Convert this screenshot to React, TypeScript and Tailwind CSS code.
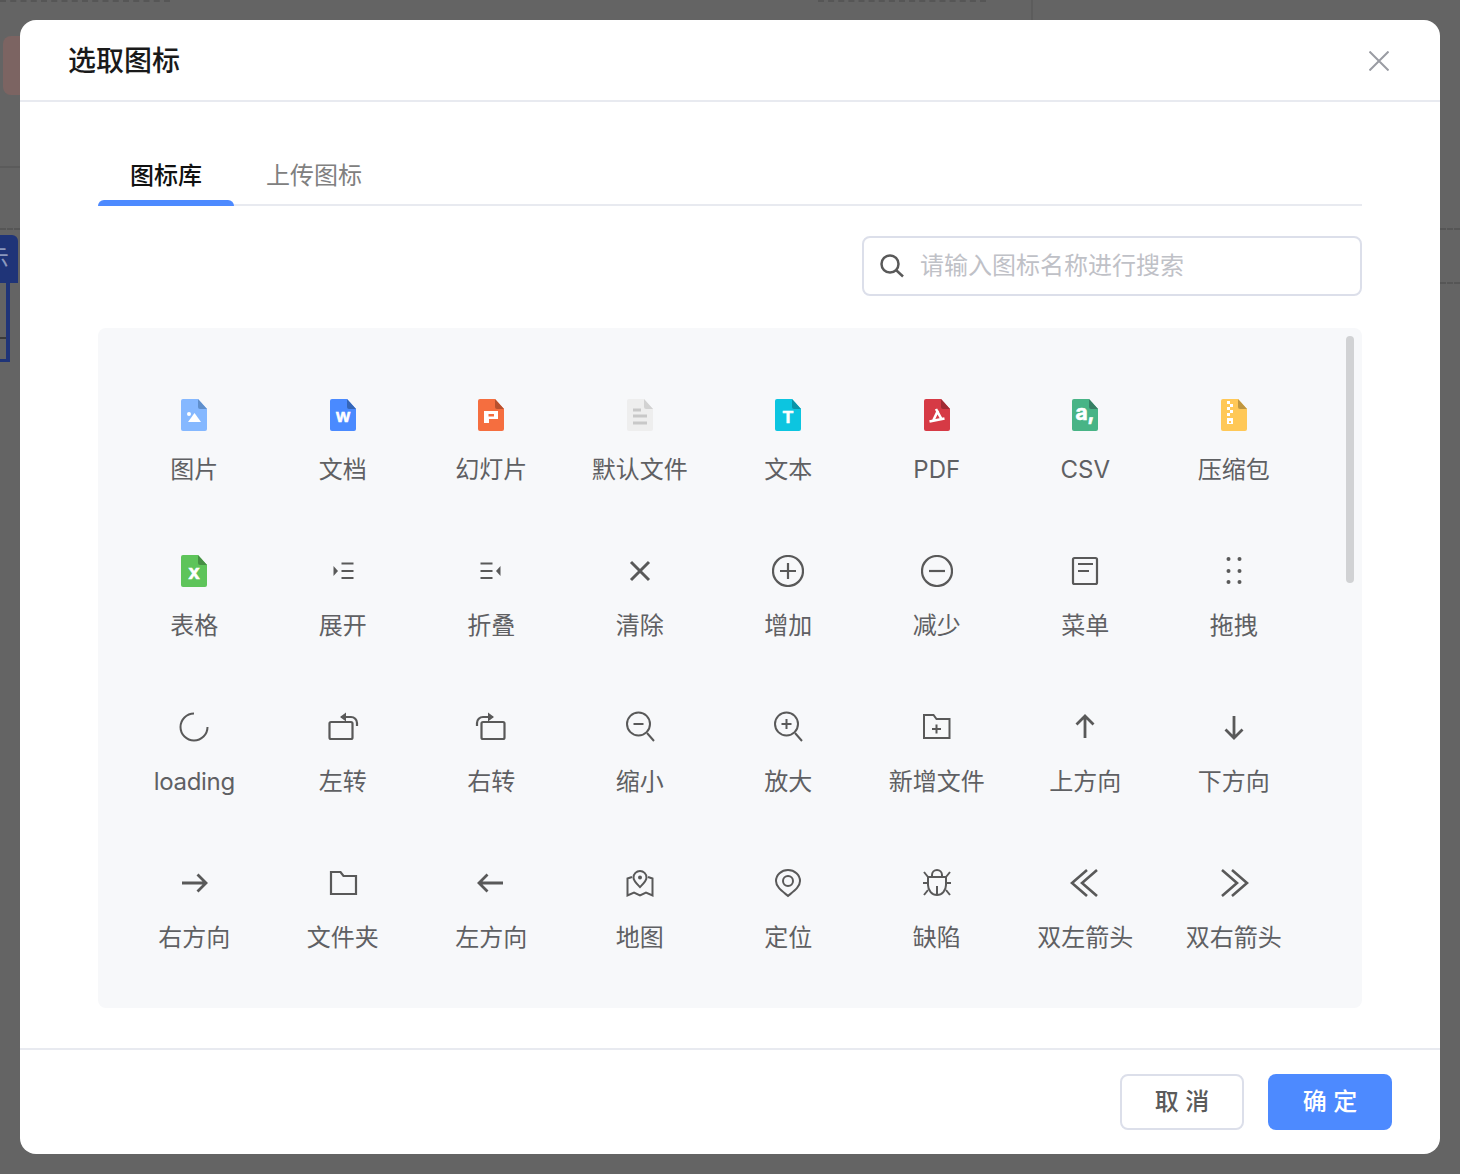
import React from "react";

const font = { fontFamily: '"Inter", "Noto Sans CJK SC", sans-serif' };

function FileIcon({ color, fold, children }: { color: string; fold: string; children?: React.ReactNode }) {
  return (
    <svg width="32" height="32" viewBox="-3 0 32 32">
      <path d="M2 0H17L26 10V30a2 2 0 0 1-2 2H2a2 2 0 0 1-2-2V2a2 2 0 0 1 2-2Z" fill={color} />
      <path d="M17 0L26 10H19a2 2 0 0 1-2-2Z" fill={fold} />
      {children}
    </svg>
  );
}

function Glyph({ t, size, y, family }: { t: string; size: number; y: number; family?: string }) {
  return (
    <text x="13" y={y} fontSize={size} fontWeight="700" fill="#fff" stroke="#fff" strokeWidth="0.6" textAnchor="middle" fontFamily={family ?? '"Liberation Sans", sans-serif'}>
      {t}
    </text>
  );
}

function Line({ children, w = 2 }: { children: React.ReactNode; w?: number }) {
  return (
    <svg width="32" height="32" viewBox="0 0 32 32" fill="none" stroke="#595959" strokeWidth={w}>
      {children}
    </svg>
  );
}

const RotateShape = () => (
  <>
    <rect x="2.5" y="11" width="23" height="17" rx="1.5" />
    <path d="M30 15V12a6 6 0 0 0-6-6H14" />
    <path d="M19 1.5L13 6L19 10.5Z" fill="#595959" stroke="none" />
  </>
);

const items: { label: string; icon: React.ReactNode }[] = [
  {
    label: "图片",
    icon: (
      <FileIcon color="#85b8ff" fold="#5f8fcc">
        <circle cx="8" cy="15" r="2" fill="#fff" />
        <path d="M7 23L13.5 14L20 23Z" fill="#fff" />
      </FileIcon>
    ),
  },
  { label: "文档", icon: <FileIcon color="#4a8aff" fold="#3566b8"><Glyph t="W" size={15} y={23} /></FileIcon> },
  { label: "幻灯片", icon: <FileIcon color="#f56e3f" fold="#b8502e"><path fillRule="evenodd" d="M6 12H20V20H11V24H6ZM10.5 15V17.5H16V15Z" fill="#fff" /></FileIcon> },
  {
    label: "默认文件",
    icon: (
      <FileIcon color="#eeeeee" fold="#d2d2d2">
        <path d="M6 11H14M6 17H20M6 24H20" stroke="#c8c8c8" strokeWidth="3" />
      </FileIcon>
    ),
  },
  { label: "文本", icon: <FileIcon color="#0cc5e0" fold="#0a94a8"><Glyph t="T" size={17} y={24} /></FileIcon> },
  {
    label: "PDF",
    icon: (
      <FileIcon color="#d63a45" fold="#a02b34">
        <path d="M12 10L18 21M14 11.5L9 22M5.5 22.5L20.5 19.5" stroke="#fff" strokeWidth="2.6" fill="none" />
      </FileIcon>
    ),
  },
  { label: "CSV", icon: <FileIcon color="#48b486" fold="#367f64"><Glyph t="a," size={21} y={21} family='"Inter", sans-serif' /></FileIcon> },
  {
    label: "压缩包",
    icon: (
      <FileIcon color="#ffc857" fold="#bf9640">
        <path d="M6 2h3v3H6ZM9 5h3v3H9ZM6 8h3v3H6ZM9 11h3v3H9ZM6 14h3v3H6Z" fill="#fff" />
        <path fillRule="evenodd" d="M6 19h6v6H6ZM8 22h2v2H8Z" fill="#fff" />
      </FileIcon>
    ),
  },
  { label: "表格", icon: <FileIcon color="#5ec45a" fold="#468f44"><Glyph t="x" size={20} y={24} /></FileIcon> },
  {
    label: "展开",
    icon: (
      <Line>
        <path d="M6.5 11L11 16L6.5 21Z" fill="#595959" stroke="none" />
        <path d="M14.5 8.5H26.5M14.5 16H26.5M14.5 23H26.5" />
      </Line>
    ),
  },
  {
    label: "折叠",
    icon: (
      <Line>
        <path d="M25.5 11L21 16L25.5 21Z" fill="#595959" stroke="none" />
        <path d="M5.5 8.5H17.5M5.5 16H17.5M5.5 23H17.5" />
      </Line>
    ),
  },
  { label: "清除", icon: <Line w={3}><path d="M7 7L25 25M25 7L7 25" /></Line> },
  {
    label: "增加",
    icon: (
      <Line w={2.2}>
        <circle cx="16" cy="16" r="15" />
        <path d="M16 8V24M8 16H24" />
      </Line>
    ),
  },
  {
    label: "减少",
    icon: (
      <Line w={2.2}>
        <circle cx="16" cy="16" r="15" />
        <path d="M8 16H24" />
      </Line>
    ),
  },
  {
    label: "菜单",
    icon: (
      <Line w={2.2}>
        <rect x="4" y="3" width="24" height="26" rx="1.5" />
        <path d="M9 9H24M9 16H20" />
      </Line>
    ),
  },
  {
    label: "拖拽",
    icon: (
      <svg width="32" height="32" viewBox="0 0 32 32" fill="#595959">
        <circle cx="10.5" cy="4" r="2" />
        <circle cx="21.5" cy="4" r="2" />
        <circle cx="10.5" cy="16" r="2" />
        <circle cx="21.5" cy="16" r="2" />
        <circle cx="10.5" cy="27" r="2" />
        <circle cx="21.5" cy="27" r="2" />
      </svg>
    ),
  },
  { label: "loading", icon: <Line><path d="M16 2.5A13.5 13.5 0 1 0 29.5 16" /></Line> },
  { label: "左转", icon: <Line w={2.2}><RotateShape /></Line> },
  { label: "右转", icon: <Line w={2.2}><g transform="matrix(-1 0 0 1 32 0)"><RotateShape /></g></Line> },
  {
    label: "缩小",
    icon: (
      <Line>
        <circle cx="14.5" cy="13" r="11.5" />
        <path d="M23 22L30 30M9.5 13H19.5" />
      </Line>
    ),
  },
  {
    label: "放大",
    icon: (
      <Line>
        <circle cx="14.5" cy="13" r="11.5" />
        <path d="M23 22L30 30M9.5 13H19.5M14.5 8V18" />
      </Line>
    ),
  },
  {
    label: "新增文件",
    icon: (
      <Line>
        <path d="M3 4H12.5L15.5 8H28.5V27H3Z" />
        <path d="M11 18H20M15.5 13.5V22.5" />
      </Line>
    ),
  },
  { label: "上方向", icon: <Line w={2.8}><path d="M16 27V5M7.5 13.5L16 5L24.5 13.5" /></Line> },
  { label: "下方向", icon: <Line w={2.8}><path d="M16 5V27M7.5 18.5L16 27L24.5 18.5" /></Line> },
  { label: "右方向", icon: <Line w={2.8}><path d="M4 16H28M19.5 7.5L28 16L19.5 24.5" /></Line> },
  { label: "文件夹", icon: <Line w={2.2}><path d="M4 5H13.5L16.5 9H29V27H4Z" /></Line> },
  { label: "左方向", icon: <Line w={2.8}><path d="M28 16H4M12.5 7.5L4 16L12.5 24.5" /></Line> },
  {
    label: "地图",
    icon: (
      <Line>
        <path d="M16 20C12.5 16.5 9.5 14 9.5 10.5A6.5 6.5 0 0 1 22.5 10.5C22.5 14 19.5 16.5 16 20Z" />
        <circle cx="16" cy="10.5" r="2" fill="#595959" stroke="none" />
        <path d="M8 10L3.5 11.5V28.5L10 25.5L16 28.5L22 25.5L28.5 28.5V11.5L24 10" />
      </Line>
    ),
  },
  {
    label: "定位",
    icon: (
      <Line>
        <path d="M16 29C10 24 4 20 4 14A12 11 0 0 1 28 14C28 20 22 24 16 29Z" />
        <circle cx="16" cy="14" r="5" />
      </Line>
    ),
  },
  {
    label: "缺陷",
    icon: (
      <Line>
        <path d="M11 9.5V8a5 5 0 0 1 10 0V9.5" />
        <path d="M7 10H25V18a9 10 0 0 1-18 0Z" />
        <path d="M16 19V28M7 10L3 5M25 10L29 5M2 16H7M25 16H30M7 23L3 28M25 23L29 28" />
      </Line>
    ),
  },
  { label: "双左箭头", icon: <Line w={2.6}><path d="M18 3L3 16L18 29M28 3L13 16L28 29" /></Line> },
  { label: "双右箭头", icon: <Line w={2.6}><path d="M4 3L19 16L4 29M14 3L29 16L14 29" /></Line> },
];

export default function App() {
  return (
    <div className="relative h-[1174px] w-[1460px] overflow-hidden bg-[#646464]" style={font}>
      <div className="absolute left-0 top-0 h-[2px] w-[170px] border-t-2 border-dashed border-[#565656]" />
      <div className="absolute left-[818px] top-0 h-[2px] w-[168px] border-t-2 border-dashed border-[#565656]" />
      <div className="absolute left-[1031px] top-0 h-[20px] w-[2px] bg-[#5c5c5c]" />
      <div className="absolute left-[3px] top-[36px] h-[59px] w-[20px] rounded-l-lg bg-[#7c6462]" />
      <div className="absolute left-0 top-[166px] h-[2px] w-[20px] bg-[#5b5b5b]" />
      <div className="absolute left-0 top-[228px] h-[2px] w-[20px] border-t-2 border-dashed border-[#565656]" />
      <div className="absolute right-0 top-[228px] h-[2px] w-[20px] border-t-2 border-dashed border-[#565656]" />
      <div className="absolute right-0 top-[282px] h-[2px] w-[20px] border-t-2 border-dashed border-[#565656]" />
      <div className="absolute left-0 top-[235px] flex h-[48px] w-[18px] items-center justify-end overflow-hidden rounded-tr-md bg-[#1f3478] pr-[9px] text-[24px] text-[#8b98bd]">
        <span className="shrink-0">示</span>
      </div>
      <div className="absolute left-0 top-[283px] h-[79px] w-[10px] border-r-[4px] border-b-[3px] border-[#1f3478]">
        <div className="mt-[54px] h-[2px] w-full bg-[#3a3a3a]" />
      </div>

      <div className="absolute left-[20px] top-[20px] flex h-[1134px] w-[1420px] flex-col rounded-2xl bg-white">
        <div className="flex h-[82px] shrink-0 items-center justify-between border-b-2 border-[#e8eaf0] pl-[48px] pr-[51px] pt-[2px]">
          <span className="text-[28px] font-medium leading-[40px] text-[#1a1a1a]">选取图标</span>
          <svg width="20" height="20" viewBox="0 0 20 20" fill="none" stroke="#9a9ca3" strokeWidth="2">
            <path d="M0.5 0.5L19.5 19.5M19.5 0.5L0.5 19.5" />
          </svg>
        </div>

        <div className="flex flex-1 flex-col px-[78px]">
          <div className="mt-[40px] flex h-[64px] shrink-0 border-b-2 border-[#e8eaf0]">
            <div className="relative h-[64px] w-[136px] pt-[18px] text-center text-[24px] font-medium leading-[32px] text-[#111111]">
              图标库
              <div className="absolute bottom-0 left-0 h-[6px] w-full rounded-t-md bg-[#4d8aff]" />
            </div>
            <div className="px-[32px] pt-[18px] text-[24px] leading-[32px] text-[#808080]">上传图标</div>
          </div>

          <div className="mt-[30px] flex h-[60px] w-[500px] shrink-0 items-center self-end rounded-lg border-2 border-[#dcdfea] pl-[16px]">
            <svg width="24" height="24" viewBox="0 0 24 24" fill="none" stroke="#595959" strokeWidth="2.5">
              <circle cx="10" cy="10" r="8.5" />
              <path d="M16 16L23 22.5" />
            </svg>
            <span className="ml-[16px] text-[24px] leading-[32px] text-[#bfc1c7]">请输入图标名称进行搜索</span>
          </div>

          <div className="relative mt-[32px] h-[680px] shrink-0 rounded-lg bg-[#f7f8fa] pl-[22px] pt-[44px]">
            <div className="absolute right-[8px] top-[8px] h-[247px] w-[8px] rounded bg-[#d1d2d4]" />
            <div className="grid w-[1188px] grid-cols-8">
              {items.map((it) => (
                <div key={it.label} className="flex h-[156px] flex-col items-center pt-[27px]">
                  <div className="h-[32px] w-[32px]">{it.icon}</div>
                  <div className="mt-[23px] whitespace-nowrap text-[24px] leading-[32px] text-[#5f6063]">
                    <span className={it.label === "loading" ? "tracking-[-0.3px]" : ""}>{it.label}</span>
                  </div>
                </div>
              ))}
            </div>
          </div>
        </div>

        <div className="flex h-[106px] shrink-0 justify-end gap-[24px] border-t-2 border-[#e8eaf0] pr-[48px] pt-[24px]">
          <div className="flex h-[56px] w-[124px] items-center justify-center rounded-lg border-2 border-[#dcdfea] bg-white text-[24px] font-medium text-[#5a5a5a]">
            取 消
          </div>
          <div className="flex h-[56px] w-[124px] items-center justify-center rounded-lg bg-[#4d8aff] text-[24px] font-medium text-white">
            确 定
          </div>
        </div>
      </div>
    </div>
  );
}
